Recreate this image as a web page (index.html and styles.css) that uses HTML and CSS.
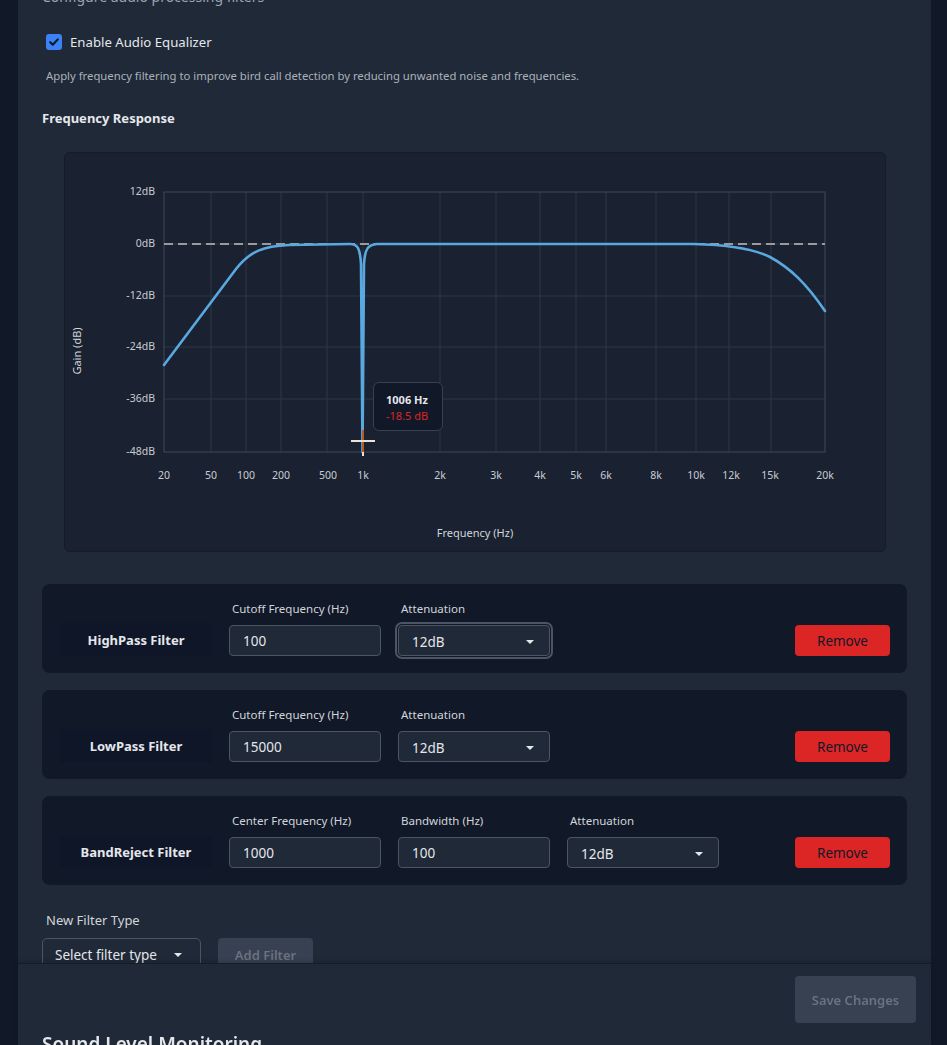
FILE: index.html
```html
<!DOCTYPE html>
<html lang="en">
<head>
<meta charset="utf-8">
<title>Audio Equalizer</title>
<link rel="stylesheet" href="styles.css">
</head>
<body>
<div class="page">
  <main class="panel">
    <p class="subtitle">Configure audio processing filters</p>

    <label class="check-row">
      <span class="checkbox">
        <svg width="12" height="12" viewBox="0 0 12 12"><path d="M2.2 6.3 L4.8 8.8 L9.8 3.4" fill="none" stroke="#0b1220" stroke-width="2" stroke-linecap="round" stroke-linejoin="round"/></svg>
      </span>
      <span>Enable Audio Equalizer</span>
    </label>
    <p class="desc">Apply frequency filtering to improve bird call detection by reducing unwanted noise and frequencies.</p>

    <h3 class="section-title">Frequency Response</h3>

    <div class="chart">
      <svg class="chart-svg" width="820" height="398" viewBox="1 1 820 398">
        <g class="grid">
          <line x1="147" y1="40" x2="147" y2="300"/>
          <line x1="182" y1="40" x2="182" y2="300"/>
          <line x1="217" y1="40" x2="217" y2="300"/>
          <line x1="263" y1="40" x2="263" y2="300"/>
          <line x1="299" y1="40" x2="299" y2="300"/>
          <line x1="376" y1="40" x2="376" y2="300"/>
          <line x1="432" y1="40" x2="432" y2="300"/>
          <line x1="476" y1="40" x2="476" y2="300"/>
          <line x1="512" y1="40" x2="512" y2="300"/>
          <line x1="542" y1="40" x2="542" y2="300"/>
          <line x1="592" y1="40" x2="592" y2="300"/>
          <line x1="632" y1="40" x2="632" y2="300"/>
          <line x1="665" y1="40" x2="665" y2="300"/>
          <line x1="707" y1="40" x2="707" y2="300"/>
          <line x1="100" y1="92" x2="761" y2="92"/>
          <line x1="100" y1="144" x2="761" y2="144"/>
          <line x1="100" y1="195" x2="761" y2="195"/>
          <line x1="100" y1="247" x2="761" y2="247"/>
        </g>
        <rect class="plot-border" x="100" y="40" width="661" height="260"/>
        <line class="zero-line" x1="100" y1="92" x2="761" y2="92"/>
        <path class="curve" d="M100,213 L172,117 C186,99 200,94 225,93 L286,92 C293,92 296,95 297,112 L298.5,300 L300,112 C301,96 304,93 313,92 L630,92 C668,93 690,97 706,105 C726,116 742,131 761,159"/>
        <line class="cross-v" x1="299" y1="278" x2="299" y2="300"/>
        <line class="cross-tick" x1="299" y1="300" x2="299" y2="304"/>
        <line class="cross-h" x1="287" y1="289" x2="311" y2="289"/>
        <g class="ylabels">
          <text x="91" y="40">12dB</text>
          <text x="91" y="92">0dB</text>
          <text x="91" y="144">-12dB</text>
          <text x="91" y="195">-24dB</text>
          <text x="91" y="247">-36dB</text>
          <text x="91" y="300">-48dB</text>
        </g>
        <g class="xlabels">
          <text x="100" y="324">20</text>
          <text x="147" y="324">50</text>
          <text x="182" y="324">100</text>
          <text x="217" y="324">200</text>
          <text x="264" y="324">500</text>
          <text x="299" y="324">1k</text>
          <text x="376" y="324">2k</text>
          <text x="432" y="324">3k</text>
          <text x="476" y="324">4k</text>
          <text x="512" y="324">5k</text>
          <text x="542" y="324">6k</text>
          <text x="592" y="324">8k</text>
          <text x="632" y="324">10k</text>
          <text x="667" y="324">12k</text>
          <text x="706" y="324">15k</text>
          <text x="761" y="324">20k</text>
        </g>
        <text class="axis-title" transform="translate(14 199) rotate(-90)">Gain (dB)</text>
        <text class="axis-title" x="411" y="382">Frequency (Hz)</text>
      </svg>
      <div class="tooltip">
        <div class="tt-hz">1006 Hz</div>
        <div class="tt-db">-18.5 dB</div>
      </div>
    </div>

    <section class="filters">
      <div class="filter-card">
        <div class="filter-name">HighPass Filter</div>
        <div class="field">
          <span class="field-label">Cutoff Frequency (Hz)</span>
          <div class="input">100</div>
        </div>
        <div class="field">
          <span class="field-label">Attenuation</span>
          <div class="input select focused">12dB<span class="caret"></span></div>
        </div>
        <button class="remove">Remove</button>
      </div>

      <div class="filter-card">
        <div class="filter-name">LowPass Filter</div>
        <div class="field">
          <span class="field-label">Cutoff Frequency (Hz)</span>
          <div class="input">15000</div>
        </div>
        <div class="field">
          <span class="field-label">Attenuation</span>
          <div class="input select">12dB<span class="caret"></span></div>
        </div>
        <button class="remove">Remove</button>
      </div>

      <div class="filter-card">
        <div class="filter-name">BandReject Filter</div>
        <div class="field">
          <span class="field-label">Center Frequency (Hz)</span>
          <div class="input">1000</div>
        </div>
        <div class="field">
          <span class="field-label">Bandwidth (Hz)</span>
          <div class="input">100</div>
        </div>
        <div class="field">
          <span class="field-label">Attenuation</span>
          <div class="input select">12dB<span class="caret"></span></div>
        </div>
        <button class="remove">Remove</button>
      </div>
    </section>

    <p class="new-label">New Filter Type</p>
    <div class="add-row">
      <div class="new-select">Select filter type<span class="caret"></span></div>
      <button class="add-btn">Add Filter</button>
    </div>
  </main>
</div>

<footer class="footer">
  <div class="footer-actions">
    <button class="save-btn">Save Changes</button>
  </div>
  <h2 class="next-title">Sound Level Monitoring</h2>
</footer>
</body>
</html>
```

FILE: styles.css
```css
html, body {
  margin: 0;
  height: 1045px;
  overflow: hidden;
}

body {
  background: #111827;
  font-family: "Noto Sans", "Open Sans", sans-serif;
  color: #e5e7eb;
}

.page {
  display: flex;
  padding: 0 16px 0 18px;
  min-height: 1045px;
  box-sizing: border-box;
}

.panel {
  flex: 1;
  background: #1f2937;
  padding: 0 24px;
}

.subtitle {
  margin: -13px 0 0;
  font-size: 14px;
  line-height: 20px;
  color: #9ca3af;
}

.check-row {
  display: flex;
  align-items: center;
  gap: 8px;
  margin-top: 25px;
  padding-left: 4px;
  height: 20px;
  font-size: 13.2px;
  color: #e5e7eb;
}

.checkbox {
  width: 16px;
  height: 16px;
  border-radius: 3px;
  background: #3b82f6;
  display: flex;
  align-items: center;
  justify-content: center;
}

.desc {
  margin: 16px 0 0;
  padding-left: 4px;
  font-size: 11.3px;
  line-height: 16px;
  color: #aab1bb;
}

.section-title {
  margin: 26px 0 0;
  font-size: 13px;
  line-height: 16px;
  font-weight: 700;
  color: #e5e7eb;
}

.chart {
  position: relative;
  margin: 26px 21px 0 22px;
  height: 400px;
  box-sizing: border-box;
  background: #1a2130;
  border: 1px solid #151b27;
  border-radius: 6px;
}

.chart-svg {
  display: block;
}

.grid line {
  stroke: #2e3746;
  stroke-width: 1;
}

.plot-border {
  fill: none;
  stroke: #3a4350;
  stroke-width: 1.2;
}

.zero-line {
  stroke: #9a9a9a;
  stroke-width: 2;
  stroke-dasharray: 9 5;
}

.curve {
  fill: none;
  stroke: #5aa8e0;
  stroke-width: 2.6;
  stroke-linejoin: round;
  stroke-linecap: round;
}

.cross-v {
  stroke: #b85a1c;
  stroke-width: 2;
}

.cross-tick {
  stroke: #e8e2d6;
  stroke-width: 2;
}

.cross-h {
  stroke: #ebe4d6;
  stroke-width: 2;
}

.ylabels text {
  font-size: 10.5px;
  fill: #c9cdd3;
  text-anchor: end;
  dominant-baseline: middle;
}

.xlabels text {
  font-size: 10.5px;
  fill: #c9cdd3;
  text-anchor: middle;
  dominant-baseline: middle;
}

.axis-title {
  font-size: 11px;
  fill: #d1d5db;
  text-anchor: middle;
  dominant-baseline: middle;
}

.tooltip {
  position: absolute;
  left: 308px;
  top: 229px;
  width: 70px;
  height: 49px;
  box-sizing: border-box;
  padding: 9px 0 0 12px;
  background: #111827;
  border: 1px solid #374151;
  border-radius: 6px;
  font-size: 11px;
  line-height: 16px;
}

.tt-hz {
  font-weight: 700;
  color: #e5e7eb;
}

.tt-db {
  color: #dc2626;
}

.filters {
  display: flex;
  flex-direction: column;
  gap: 17px;
  margin-top: 32px;
}

.filter-card {
  display: flex;
  align-items: flex-end;
  gap: 17px;
  padding: 17px 17px 17px 18px;
  background: #111827;
  border-radius: 8px;
}

.filter-name {
  width: 152px;
  height: 33px;
  display: flex;
  align-items: center;
  justify-content: center;
  background: #0f1628;
  border-radius: 4px;
  font-size: 13px;
  font-weight: 700;
  color: #e5e7eb;
}

.field {
  display: flex;
  flex-direction: column;
  width: 152px;
}

.field-label {
  margin: 0 0 8px 3px;
  font-size: 11.5px;
  line-height: 16px;
  color: #d1d5db;
}

.input {
  position: relative;
  height: 31px;
  box-sizing: border-box;
  display: flex;
  align-items: center;
  padding: 0 13px;
  background: #1f2937;
  border: 1px solid #4b5563;
  border-radius: 4px;
  font-size: 13.5px;
  color: #e5e7eb;
}

.select {
  padding-left: 13px;
  padding-top: 2px;
}

.focused {
  outline: 2px solid #4b5563;
  outline-offset: 1px;
}

.caret {
  margin-left: auto;
  margin-right: 2px;
  width: 0;
  height: 0;
  border-left: 4px solid transparent;
  border-right: 4px solid transparent;
  border-top: 4px solid #e5e7eb;
}

.remove {
  margin-left: auto;
  width: 95px;
  height: 31px;
  border: none;
  border-radius: 4px;
  background: #dc2626;
  color: #111827;
  font-family: inherit;
  font-size: 13.5px;
  padding: 0;
}

.new-label {
  margin: 26px 0 0;
  padding-left: 4px;
  font-size: 13px;
  line-height: 18px;
  color: #d1d5db;
}

.add-row {
  display: flex;
  align-items: flex-start;
  gap: 17px;
  margin-top: 9px;
}

.new-select {
  width: 159px;
  height: 34px;
  box-sizing: border-box;
  display: flex;
  align-items: center;
  padding: 0 16px 0 12px;
  border: 1px solid #4b5563;
  border-radius: 5px;
  background: #1f2937;
  font-size: 13.5px;
  color: #e5e7eb;
}

.add-btn {
  width: 95px;
  height: 34px;
  border: none;
  border-radius: 4px;
  background: #374151;
  color: #6b7280;
  font-family: inherit;
  font-size: 13px;
  font-weight: 600;
  padding: 0;
}

.footer {
  position: fixed;
  left: 18px;
  width: 913px;
  top: 963px;
  bottom: 0;
  background: #1f2937;
  border-top: 1px solid #151c28;
  box-shadow: 0 -2px 4px rgba(0, 0, 0, 0.15);
}

.footer-actions {
  display: flex;
  justify-content: flex-end;
  padding: 12px 15px 0;
}

.save-btn {
  width: 121px;
  height: 47px;
  border: none;
  border-radius: 4px;
  background: #374151;
  color: #6b7280;
  font-family: inherit;
  font-size: 13px;
  font-weight: 600;
  padding: 0;
}

.next-title {
  margin: 9px 0 0 24px;
  font-size: 19px;
  line-height: 24px;
  font-weight: 600;
  color: #e5e7eb;
}
```
